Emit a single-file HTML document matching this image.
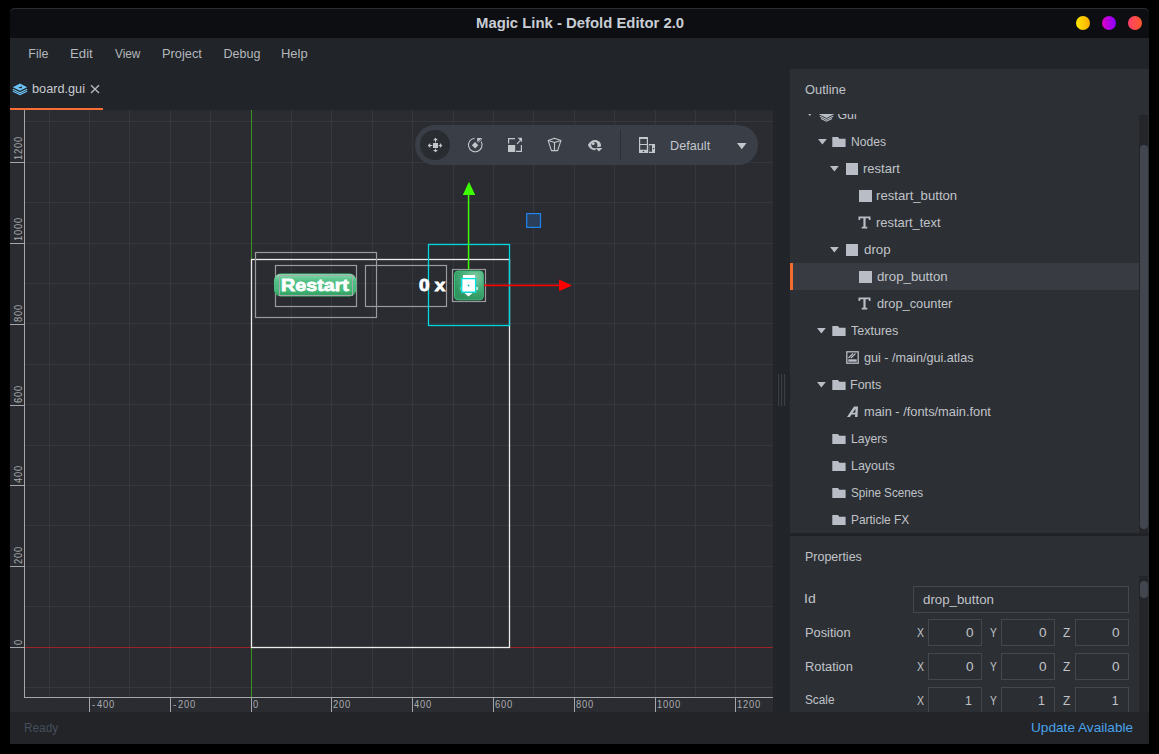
<!DOCTYPE html>
<html><head><meta charset="utf-8">
<style>
*{margin:0;padding:0;box-sizing:border-box}
html,body{width:1159px;height:754px;overflow:hidden;background:#000;font-family:"Liberation Sans",sans-serif;position:relative}
.r{position:absolute}
.t{position:absolute;white-space:nowrap;line-height:1;transform-origin:0 0}
.dot{position:absolute;top:15.7px;width:14px;height:14px;border-radius:50%}
</style></head><body>
<div class="r" style="left:10px;top:8px;width:1139px;height:736px;background:#212428;border-radius:5px 5px 0 0;"></div>
<div class="r" style="left:10px;top:8px;width:1139px;height:30px;background:#0c0e12;border-radius:5px 5px 0 0;box-shadow:inset 0 1px 0 #2a2c31;"></div>
<div class="t" style="left:475.63px;top:15.61px;font-size:14.75px;color:#c9cdd4;font-weight:bold;transform:scaleX(1.0077);">Magic Link - Defold Editor 2.0</div>
<div class="dot" style="left:1076px;background:linear-gradient(90deg,#ffe800,#ffad00)"></div>
<div class="dot" style="left:1102px;background:linear-gradient(90deg,#dc00c4,#8800ff)"></div>
<div class="dot" style="left:1128px;background:linear-gradient(90deg,#ff3f6c,#ff5a28)"></div>
<div class="t" style="left:28.30px;top:47.52px;font-size:12.5px;color:#b4b8bd;font-weight:normal;">File</div>
<div class="t" style="left:70.24px;top:47.52px;font-size:12.5px;color:#b4b8bd;font-weight:normal;transform:scaleX(1.0585);">Edit</div>
<div class="t" style="left:115.00px;top:47.52px;font-size:12.5px;color:#b4b8bd;font-weight:normal;transform:scaleX(0.9451);">View</div>
<div class="t" style="left:162.18px;top:47.52px;font-size:12.5px;color:#b4b8bd;font-weight:normal;transform:scaleX(1.0244);">Project</div>
<div class="t" style="left:223.50px;top:47.52px;font-size:12.5px;color:#b4b8bd;font-weight:normal;">Debug</div>
<div class="t" style="left:281.16px;top:47.52px;font-size:12.5px;color:#b4b8bd;font-weight:normal;transform:scaleX(1.0377);">Help</div>
<svg class="r" style="left:12px;top:83px" width="17" height="13" viewBox="0 0 17 13">
<path d="M0.8 4.2 L8 0.6 L15.2 4.2 L8 7.8 Z" fill="#6cc3f5"/>
<path d="M6.2 4.6 L10.2 3.2 L9.6 5.6 Z" fill="#212428"/>
<g fill="none" stroke="#6cc3f5" stroke-width="1.1" stroke-linejoin="miter">
<path d="M0.8 6.3 L8 9.8 L15.2 6.3"/>
<path d="M0.8 8.3 L8 11.6 L15.2 8.3"/>
</g></svg>
<div class="t" style="left:32.24px;top:82.73px;font-size:12.6px;color:#c7cbd0;font-weight:normal;transform:scaleX(1.0085);">board.gui</div>
<svg class="r" style="left:90px;top:84px" width="10" height="10" viewBox="0 0 10 10"><path d="M1 1.2 L9 9 M9 1.2 L1 9" stroke="#b4b8bc" stroke-width="1.4"/></svg>
<div class="r" style="left:10px;top:108px;width:93px;height:2px;background:#f76d33;"></div>
<div class="r" style="left:10px;top:110px;width:763px;height:602px;background:#2a2c31;"></div>
<svg class="r" style="left:10px;top:110px" width="763" height="602" viewBox="10 110 763 602" shape-rendering="crispEdges"><g fill="#34373c"><rect x="49" y="110" width="1" height="587"/><rect x="89" y="110" width="1" height="587"/><rect x="129" y="110" width="1" height="587"/><rect x="170" y="110" width="1" height="587"/><rect x="210" y="110" width="1" height="587"/><rect x="251" y="110" width="1" height="587"/><rect x="291" y="110" width="1" height="587"/><rect x="331" y="110" width="1" height="587"/><rect x="372" y="110" width="1" height="587"/><rect x="412" y="110" width="1" height="587"/><rect x="453" y="110" width="1" height="587"/><rect x="493" y="110" width="1" height="587"/><rect x="533" y="110" width="1" height="587"/><rect x="574" y="110" width="1" height="587"/><rect x="614" y="110" width="1" height="587"/><rect x="655" y="110" width="1" height="587"/><rect x="695" y="110" width="1" height="587"/><rect x="735" y="110" width="1" height="587"/><rect x="25" y="687" width="748" height="1"/><rect x="25" y="647" width="748" height="1"/><rect x="25" y="606" width="748" height="1"/><rect x="25" y="566" width="748" height="1"/><rect x="25" y="525" width="748" height="1"/><rect x="25" y="485" width="748" height="1"/><rect x="25" y="445" width="748" height="1"/><rect x="25" y="404" width="748" height="1"/><rect x="25" y="364" width="748" height="1"/><rect x="25" y="323" width="748" height="1"/><rect x="25" y="283" width="748" height="1"/><rect x="25" y="243" width="748" height="1"/><rect x="25" y="202" width="748" height="1"/><rect x="25" y="162" width="748" height="1"/><rect x="25" y="121" width="748" height="1"/></g><rect x="24" y="110" width="1" height="588" fill="#a4a6a9"/><rect x="24" y="697" width="749" height="1" fill="#a4a6a9"/><rect x="89" y="697" width="1" height="15" fill="#a4a6a9"/><rect x="170" y="697" width="1" height="15" fill="#a4a6a9"/><rect x="251" y="697" width="1" height="15" fill="#a4a6a9"/><rect x="331" y="697" width="1" height="15" fill="#a4a6a9"/><rect x="412" y="697" width="1" height="15" fill="#a4a6a9"/><rect x="493" y="697" width="1" height="15" fill="#a4a6a9"/><rect x="574" y="697" width="1" height="15" fill="#a4a6a9"/><rect x="655" y="697" width="1" height="15" fill="#a4a6a9"/><rect x="735" y="697" width="1" height="15" fill="#a4a6a9"/><rect x="10" y="647" width="15" height="1" fill="#a4a6a9"/><rect x="10" y="566" width="15" height="1" fill="#a4a6a9"/><rect x="10" y="485" width="15" height="1" fill="#a4a6a9"/><rect x="10" y="405" width="15" height="1" fill="#a4a6a9"/><rect x="10" y="324" width="15" height="1" fill="#a4a6a9"/><rect x="10" y="243" width="15" height="1" fill="#a4a6a9"/><rect x="10" y="162" width="15" height="1" fill="#a4a6a9"/><rect x="25" y="647" width="748" height="1" fill="#9c2427"/><rect x="251" y="110" width="1" height="587" fill="#37921f"/></svg>
<div class="t" style="left:92.44px;top:700.27px;font-size:10.2px;color:#a9abae;transform:scaleX(0.92)">-</div>
<div class="t" style="left:97.39px;top:700.27px;font-size:10.2px;color:#a9abae;transform:scaleX(0.92)">4</div>
<div class="t" style="left:103.39px;top:700.27px;font-size:10.2px;color:#a9abae;transform:scaleX(0.92)">0</div>
<div class="t" style="left:109.39px;top:700.27px;font-size:10.2px;color:#a9abae;transform:scaleX(0.92)">0</div>
<div class="t" style="left:173.44px;top:700.27px;font-size:10.2px;color:#a9abae;transform:scaleX(0.92)">-</div>
<div class="t" style="left:178.39px;top:700.27px;font-size:10.2px;color:#a9abae;transform:scaleX(0.92)">2</div>
<div class="t" style="left:184.39px;top:700.27px;font-size:10.2px;color:#a9abae;transform:scaleX(0.92)">0</div>
<div class="t" style="left:190.39px;top:700.27px;font-size:10.2px;color:#a9abae;transform:scaleX(0.92)">0</div>
<div class="t" style="left:253.39px;top:700.27px;font-size:10.2px;color:#a9abae;transform:scaleX(0.92)">0</div>
<div class="t" style="left:333.39px;top:700.27px;font-size:10.2px;color:#a9abae;transform:scaleX(0.92)">2</div>
<div class="t" style="left:339.39px;top:700.27px;font-size:10.2px;color:#a9abae;transform:scaleX(0.92)">0</div>
<div class="t" style="left:345.39px;top:700.27px;font-size:10.2px;color:#a9abae;transform:scaleX(0.92)">0</div>
<div class="t" style="left:414.39px;top:700.27px;font-size:10.2px;color:#a9abae;transform:scaleX(0.92)">4</div>
<div class="t" style="left:420.39px;top:700.27px;font-size:10.2px;color:#a9abae;transform:scaleX(0.92)">0</div>
<div class="t" style="left:426.39px;top:700.27px;font-size:10.2px;color:#a9abae;transform:scaleX(0.92)">0</div>
<div class="t" style="left:495.39px;top:700.27px;font-size:10.2px;color:#a9abae;transform:scaleX(0.92)">6</div>
<div class="t" style="left:501.39px;top:700.27px;font-size:10.2px;color:#a9abae;transform:scaleX(0.92)">0</div>
<div class="t" style="left:507.39px;top:700.27px;font-size:10.2px;color:#a9abae;transform:scaleX(0.92)">0</div>
<div class="t" style="left:576.39px;top:700.27px;font-size:10.2px;color:#a9abae;transform:scaleX(0.92)">8</div>
<div class="t" style="left:582.39px;top:700.27px;font-size:10.2px;color:#a9abae;transform:scaleX(0.92)">0</div>
<div class="t" style="left:588.39px;top:700.27px;font-size:10.2px;color:#a9abae;transform:scaleX(0.92)">0</div>
<div class="t" style="left:657.39px;top:700.27px;font-size:10.2px;color:#a9abae;transform:scaleX(0.92)">1</div>
<div class="t" style="left:663.39px;top:700.27px;font-size:10.2px;color:#a9abae;transform:scaleX(0.92)">0</div>
<div class="t" style="left:669.39px;top:700.27px;font-size:10.2px;color:#a9abae;transform:scaleX(0.92)">0</div>
<div class="t" style="left:675.39px;top:700.27px;font-size:10.2px;color:#a9abae;transform:scaleX(0.92)">0</div>
<div class="t" style="left:737.39px;top:700.27px;font-size:10.2px;color:#a9abae;transform:scaleX(0.92)">1</div>
<div class="t" style="left:743.39px;top:700.27px;font-size:10.2px;color:#a9abae;transform:scaleX(0.92)">2</div>
<div class="t" style="left:749.39px;top:700.27px;font-size:10.2px;color:#a9abae;transform:scaleX(0.92)">0</div>
<div class="t" style="left:755.39px;top:700.27px;font-size:10.2px;color:#a9abae;transform:scaleX(0.92)">0</div>
<div class="t" style="left:13.77px;top:644.61px;font-size:10.2px;color:#a9abae;transform-origin:0 0;transform:rotate(-90deg) scaleX(0.92);">0</div>
<div class="t" style="left:13.77px;top:563.61px;font-size:10.2px;color:#a9abae;transform-origin:0 0;transform:rotate(-90deg) scaleX(0.92);">2</div>
<div class="t" style="left:13.77px;top:557.61px;font-size:10.2px;color:#a9abae;transform-origin:0 0;transform:rotate(-90deg) scaleX(0.92);">0</div>
<div class="t" style="left:13.77px;top:551.61px;font-size:10.2px;color:#a9abae;transform-origin:0 0;transform:rotate(-90deg) scaleX(0.92);">0</div>
<div class="t" style="left:13.77px;top:482.61px;font-size:10.2px;color:#a9abae;transform-origin:0 0;transform:rotate(-90deg) scaleX(0.92);">4</div>
<div class="t" style="left:13.77px;top:476.61px;font-size:10.2px;color:#a9abae;transform-origin:0 0;transform:rotate(-90deg) scaleX(0.92);">0</div>
<div class="t" style="left:13.77px;top:470.61px;font-size:10.2px;color:#a9abae;transform-origin:0 0;transform:rotate(-90deg) scaleX(0.92);">0</div>
<div class="t" style="left:13.77px;top:402.61px;font-size:10.2px;color:#a9abae;transform-origin:0 0;transform:rotate(-90deg) scaleX(0.92);">6</div>
<div class="t" style="left:13.77px;top:396.61px;font-size:10.2px;color:#a9abae;transform-origin:0 0;transform:rotate(-90deg) scaleX(0.92);">0</div>
<div class="t" style="left:13.77px;top:390.61px;font-size:10.2px;color:#a9abae;transform-origin:0 0;transform:rotate(-90deg) scaleX(0.92);">0</div>
<div class="t" style="left:13.77px;top:321.61px;font-size:10.2px;color:#a9abae;transform-origin:0 0;transform:rotate(-90deg) scaleX(0.92);">8</div>
<div class="t" style="left:13.77px;top:315.61px;font-size:10.2px;color:#a9abae;transform-origin:0 0;transform:rotate(-90deg) scaleX(0.92);">0</div>
<div class="t" style="left:13.77px;top:309.61px;font-size:10.2px;color:#a9abae;transform-origin:0 0;transform:rotate(-90deg) scaleX(0.92);">0</div>
<div class="t" style="left:13.77px;top:240.61px;font-size:10.2px;color:#a9abae;transform-origin:0 0;transform:rotate(-90deg) scaleX(0.92);">1</div>
<div class="t" style="left:13.77px;top:234.61px;font-size:10.2px;color:#a9abae;transform-origin:0 0;transform:rotate(-90deg) scaleX(0.92);">0</div>
<div class="t" style="left:13.77px;top:228.61px;font-size:10.2px;color:#a9abae;transform-origin:0 0;transform:rotate(-90deg) scaleX(0.92);">0</div>
<div class="t" style="left:13.77px;top:222.61px;font-size:10.2px;color:#a9abae;transform-origin:0 0;transform:rotate(-90deg) scaleX(0.92);">0</div>
<div class="t" style="left:13.77px;top:159.61px;font-size:10.2px;color:#a9abae;transform-origin:0 0;transform:rotate(-90deg) scaleX(0.92);">1</div>
<div class="t" style="left:13.77px;top:153.61px;font-size:10.2px;color:#a9abae;transform-origin:0 0;transform:rotate(-90deg) scaleX(0.92);">2</div>
<div class="t" style="left:13.77px;top:147.61px;font-size:10.2px;color:#a9abae;transform-origin:0 0;transform:rotate(-90deg) scaleX(0.92);">0</div>
<div class="t" style="left:13.77px;top:141.61px;font-size:10.2px;color:#a9abae;transform-origin:0 0;transform:rotate(-90deg) scaleX(0.92);">0</div>
<div id="vpc" style="position:absolute;left:25px;top:110px;width:748px;height:587px;overflow:hidden">
<svg class="r" style="left:-25px;top:-110px" width="1159" height="754" viewBox="0 0 1159 754">
<rect x="251.5" y="259.5" width="258" height="388" fill="none" stroke="#ececec" stroke-width="1.3"/>
<rect x="255.5" y="252.5" width="121.0" height="65.0" fill="none" stroke="#9a9b9d" stroke-width="1.2"/>
<rect x="275.5" y="265.5" width="81.0" height="41.0" fill="none" stroke="#9a9b9d" stroke-width="1.2"/>
<rect x="365.5" y="265.5" width="81.0" height="41.0" fill="none" stroke="#9a9b9d" stroke-width="1.2"/>
<defs>
<linearGradient id="gp" x1="0" y1="0" x2="0" y2="1"><stop offset="0" stop-color="#3ec276"/><stop offset="0.06" stop-color="#a0e2bf"/><stop offset="0.14" stop-color="#6ccf9a"/><stop offset="0.35" stop-color="#50bf84"/><stop offset="0.75" stop-color="#46b87a"/><stop offset="0.88" stop-color="#34a465"/><stop offset="1" stop-color="#3cb872"/></linearGradient>
<linearGradient id="gs" x1="0" y1="0" x2="1" y2="1"><stop offset="0" stop-color="#3daa6c"/><stop offset="0.5" stop-color="#5fc08e"/><stop offset="1" stop-color="#2c925c"/></linearGradient>
<radialGradient id="gs2" cx="0.7" cy="0.2" r="0.8"><stop offset="0" stop-color="#7dcaa2"/><stop offset="0.6" stop-color="#45ab75"/><stop offset="1" stop-color="#2f9560"/></radialGradient>
</defs>
<rect x="274" y="273.6" width="82.3" height="23" rx="7" fill="url(#gp)"/>
<rect x="279.5" y="275.5" width="73" height="20" fill="none" stroke="#a6a8aa" stroke-width="1"/>
<rect x="452.5" y="269.5" width="33" height="32" fill="none" stroke="#9a9b9d" stroke-width="1.2"/>
<rect x="454.5" y="271" width="28.8" height="28.8" rx="3.5" fill="url(#gs2)" stroke="#3fbf7a" stroke-width="1"/>
<g fill="#ffffff"><rect x="463" y="275" width="12" height="3"/><rect x="462.2" y="278.2" width="13.7" height="13.7"/><rect x="460.5" y="287" width="2" height="3" opacity="0.7"/><rect x="476" y="287" width="2" height="3" opacity="0.7"/><path d="M464.5 293 L472.5 293 L468.5 296.5Z"/></g>
<rect x="461.6" y="278.6" width="14" height="13.6" fill="none" stroke="#00e1e6" stroke-width="1.3"/>
<circle cx="468.5" cy="285.5" r="0.9" fill="#00c8d0"/>
<rect x="428.5" y="244.5" width="81" height="81" fill="none" stroke="#00d8df" stroke-width="1.3"/>
<rect x="467.8" y="194" width="1.5" height="75.5" fill="#3cff00"/>
<path d="M462.8 195 L475.2 195 L469 181.7Z" fill="#3cff00"/>
<rect x="484" y="284.6" width="76" height="1.6" fill="#ff0000"/>
<path d="M559 279.5 L559 291.2 L572 285.4Z" fill="#ff0000"/>
<rect x="526.7" y="213.6" width="13.8" height="13.8" fill="#2b3f5a" stroke="#1f84f0" stroke-width="1.2"/>
</svg>
</div>
<div class="t" style="left:281.32px;top:276.67px;font-size:17.4px;color:#ffffff;font-weight:bold;transform:scaleX(1.1324);-webkit-text-stroke:0.8px #fff;">Restart</div>
<div class="t" style="left:418.74px;top:277.96px;font-size:16px;color:#ffffff;font-weight:bold;transform:scaleX(1.1852);-webkit-text-stroke:0.8px #fff;">0 x</div>
<div class="r" style="left:415px;top:125px;width:343px;height:40px;background:#3a3e46;border-radius:20px;"></div>
<div class="r" style="left:420.2px;top:130.2px;width:29.6px;height:29.6px;border-radius:50%;background:#292c31"></div>
<div class="r" style="left:620px;top:130px;width:1px;height:30px;background:#2d3035;"></div>
<svg class="r" style="left:424px;top:134px" width="22" height="22" viewBox="424 134 22 22"><g fill="#c3c7cc">
<rect x="433" y="143" width="5" height="5"/>
<rect x="435" y="140" width="1" height="2.4"/><path d="M435.5 137.7 L438 140.3 L433 140.3Z"/>
<rect x="435" y="148.6" width="1" height="1.6"/><path d="M435.5 152.3 L438 149.9 L433 149.9Z"/>
<rect x="430" y="145" width="2.4" height="1"/><path d="M427.7 145.5 L430.3 143 L430.3 148Z"/>
<rect x="438.6" y="145" width="1.6" height="1"/><path d="M442.3 145.5 L439.9 143 L439.9 148Z"/>
</g></svg>
<svg class="r" style="left:464px;top:134px" width="22" height="22" viewBox="464 134 22 22">
<path d="M474.6 138.2 A6.8 6.8 0 1 0 481.2 141.6" fill="none" stroke="#c3c7cc" stroke-width="1.1"/>
<path d="M471.9 145.2 L475.1 142 L478.3 145.2 L475.1 148.4Z" fill="#c3c7cc"/>
<path d="M477.2 137.9 L482.2 137.9 L477.2 142.3Z" fill="#c3c7cc"/>
<path d="M478.3 142.6 L482 139" stroke="#c3c7cc" stroke-width="0.9" opacity="0.7"/>
</svg>
<svg class="r" style="left:504px;top:134px" width="22" height="22" viewBox="504 134 22 22">
<rect x="508" y="145" width="7.2" height="7" fill="#c3c7cc"/>
<path d="M508.6 143.5 L508.6 138.6 L515 138.6" fill="none" stroke="#c3c7cc" stroke-width="1.2"/>
<path d="M516 151.4 L521.4 151.4 L521.4 145" fill="none" stroke="#c3c7cc" stroke-width="1.2"/>
<path d="M517 143.8 L520.5 140.3" stroke="#c3c7cc" stroke-width="1.2"/><path d="M522 137.8 L522 142.2 L517.6 137.8Z" fill="#c3c7cc"/>
</svg>
<svg class="r" style="left:544px;top:134px" width="22" height="22" viewBox="544 134 22 22"><g fill="none" stroke="#c3c7cc" stroke-width="1.1" stroke-linejoin="round">
<path d="M548.2 140.6 L554.5 138.3 L560.9 140.6 L557.6 150.6 L551.4 150.6 Z"/>
<path d="M548.2 140.6 L554.5 142.6 L560.9 140.6 M554.5 142.6 L554.5 150.6"/>
</g></svg>
<svg class="r" style="left:584px;top:134px" width="22" height="22" viewBox="584 134 22 22">
<path d="M587.9 145.1 C589.6 141.5 592.5 139.9 594.8 139.9 C598.3 139.9 601 142.3 601 145.1 C601 148.1 598.2 150.2 594.8 150.2 C591.7 150.2 589.4 148.4 587.9 145.1 Z M591.2 145.1 A3.1 3.1 0 1 0 597.4 145.1 A3.1 3.1 0 1 0 591.2 145.1 Z" fill="#c3c7cc" fill-rule="evenodd"/>
<circle cx="593.1" cy="143.4" r="1.5" fill="#c3c7cc"/>
<rect x="595.6" y="146.9" width="8" height="6" fill="#3a3e46"/>
<path d="M595.6 148.1 L602.4 148.1 L599 151.5Z" fill="#c3c7cc"/>
</svg>
<svg class="r" style="left:634px;top:132px" width="26" height="26" viewBox="634 132 26 26">
<path d="M639 137 L648 137 L648 153 L639 153Z M640.2 139.1 L646.8 139.1 L646.8 143.9 L640.2 143.9Z M640.2 145.1 L646.8 145.1 L646.8 149.8 L640.2 149.8Z" fill="#c3c7cc" fill-rule="evenodd"/>
<circle cx="643.5" cy="151.5" r="0.8" fill="#3a3e46"/>
<path d="M648.8 144 L655 144 L655 153 L648.8 153Z M649.2 145.3 L652 145.3 L652 151.8 L649.2 151.8Z" fill="#c3c7cc" fill-rule="evenodd"/>
<circle cx="653.5" cy="148.5" r="0.7" fill="#3a3e46"/>
</svg>
<div class="t" style="left:670.49px;top:139.62px;font-size:12.5px;color:#c3c7cc;font-weight:normal;transform:scaleX(1.0139);">Default</div>
<svg class="r" style="left:737px;top:143px" width="10" height="7" viewBox="0 0 10 7"><path d="M0 0 L9.5 0 L4.75 6.3Z" fill="#c3c7cc"/></svg>
<svg class="r" style="left:778px;top:374px" width="8" height="32"><g fill="#3b3e43"><rect x="0" y="0" width="1.2" height="32" rx="0.6"/><rect x="3" y="0" width="1.2" height="32" rx="0.6"/><rect x="6" y="0" width="1.2" height="32" rx="0.6"/></g></svg>
<div class="r" style="left:790px;top:69px;width:359px;height:464px;background:#2c2f34;"></div>
<div class="t" style="left:804.62px;top:84.19px;font-size:12.3px;color:#c0c4c9;font-weight:normal;transform:scaleX(1.0479);">Outline</div>
<div id="tree" style="position:absolute;left:790px;top:114px;width:349px;height:419px;overflow:hidden">
<div class="t" style="left:47.38px;top:-5.40px;font-size:12.4px;color:#c0c4c9;">Gui</div><svg class="r" style="left:28.5px;top:-5.4px" width="16" height="13" viewBox="0 0 16 13"><g fill="none" stroke="#b9bec6" stroke-width="1.1"><path d="M0.8 5 L7.5 1.5 L14.2 5 L7.5 8.5Z" fill="#b9bec6"/><path d="M0.8 7.2 L7.5 10.5 L14.2 7.2"/><path d="M2 9.5 L7.5 12.2 L13 9.5"/></g></svg><svg class="r" style="left:16.7px;top:-0.6px" width="6" height="5" viewBox="0 0 6 5"><path d="M0.5 0 L5 0 L2.75 3Z" fill="#b9bec6"/></svg><div class="t" style="left:60.83px;top:21.60px;font-size:12.4px;color:#c0c4c9;transform:scaleX(0.9765);">Nodes</div><svg class="r" style="left:42.3px;top:22.6px" width="14" height="11" viewBox="0 0 14 11"><path d="M0.3 0 L6 0 L7.3 1.8 L13.6 1.8 L13.6 10 L0.3 10Z" fill="#b9bec6"/><rect x="6.3" y="1" width="7.5" height="1" fill="#2c2f34" opacity="0.0"/></svg><svg class="r" style="left:27.7px;top:24.5px" width="10" height="7" viewBox="0 0 10 7"><path d="M0 0 L8.8 0 L4.4 5.5Z" fill="#b9bec6"/></svg><div class="t" style="left:73.25px;top:48.60px;font-size:12.4px;color:#c0c4c9;transform:scaleX(1.0529);">restart</div><div class="r" style="left:55.8px;top:49.1px;width:12.6px;height:12px;background:#b9bec6"></div><svg class="r" style="left:40.0px;top:51.5px" width="10" height="7" viewBox="0 0 10 7"><path d="M0 0 L8.8 0 L4.4 5.5Z" fill="#b9bec6"/></svg><div class="t" style="left:86.44px;top:75.60px;font-size:12.4px;color:#c0c4c9;transform:scaleX(1.0619);">restart_button</div><div class="r" style="left:69.0px;top:76.1px;width:12.6px;height:12px;background:#b9bec6"></div><div class="t" style="left:86.46px;top:102.60px;font-size:12.4px;color:#c0c4c9;transform:scaleX(1.0410);">restart_text</div><svg class="r" style="left:67.8px;top:102.1px" width="13" height="13" viewBox="0 0 13 13"><path d="M0.5 0.5 L12.5 0.5 L12.5 4 L11 4 L10.5 2.3 L7.6 2.3 L7.6 10.8 L9.3 10.8 L9.3 12.4 L3.7 12.4 L3.7 10.8 L5.4 10.8 L5.4 2.3 L2.5 2.3 L2 4 L0.5 4Z" fill="#b9bec6"/></svg><div class="t" style="left:73.57px;top:129.60px;font-size:12.4px;color:#c0c4c9;transform:scaleX(1.0711);">drop</div><div class="r" style="left:55.8px;top:130.1px;width:12.6px;height:12px;background:#b9bec6"></div><svg class="r" style="left:40.0px;top:132.5px" width="10" height="7" viewBox="0 0 10 7"><path d="M0 0 L8.8 0 L4.4 5.5Z" fill="#b9bec6"/></svg><div class="r" style="left:0;top:149.1px;width:349px;height:27px;background:#383b41"></div><div class="r" style="left:0;top:149.1px;width:2.5px;height:27px;background:#f26b30"></div><div class="t" style="left:86.77px;top:156.60px;font-size:12.4px;color:#c0c4c9;transform:scaleX(1.0691);">drop_button</div><div class="r" style="left:69.0px;top:157.1px;width:12.6px;height:12px;background:#b9bec6"></div><div class="t" style="left:86.79px;top:183.60px;font-size:12.4px;color:#c0c4c9;transform:scaleX(1.0315);">drop_counter</div><svg class="r" style="left:67.8px;top:183.1px" width="13" height="13" viewBox="0 0 13 13"><path d="M0.5 0.5 L12.5 0.5 L12.5 4 L11 4 L10.5 2.3 L7.6 2.3 L7.6 10.8 L9.3 10.8 L9.3 12.4 L3.7 12.4 L3.7 10.8 L5.4 10.8 L5.4 2.3 L2.5 2.3 L2 4 L0.5 4Z" fill="#b9bec6"/></svg><div class="t" style="left:61.25px;top:210.60px;font-size:12.4px;color:#c0c4c9;transform:scaleX(1.0110);">Textures</div><svg class="r" style="left:42.0px;top:211.6px" width="14" height="11" viewBox="0 0 14 11"><path d="M0.3 0 L6 0 L7.3 1.8 L13.6 1.8 L13.6 10 L0.3 10Z" fill="#b9bec6"/><rect x="6.3" y="1" width="7.5" height="1" fill="#2c2f34" opacity="0.0"/></svg><svg class="r" style="left:27.4px;top:213.5px" width="10" height="7" viewBox="0 0 10 7"><path d="M0 0 L8.8 0 L4.4 5.5Z" fill="#b9bec6"/></svg><div class="t" style="left:74.09px;top:237.60px;font-size:12.4px;color:#c0c4c9;transform:scaleX(1.0190);">gui - /main/gui.atlas</div><svg class="r" style="left:56.1px;top:237.4px" width="13" height="13" viewBox="0 0 13 13"><rect x="0.8" y="0.8" width="11.4" height="11.4" fill="none" stroke="#b9bec6" stroke-width="1.3"/><path d="M2.5 7 L7 2.5 M5 7 L9.5 2.5" stroke="#b9bec6" stroke-width="1.1"/><rect x="2.3" y="8.3" width="8.4" height="2.4" fill="#b9bec6"/></svg><div class="t" style="left:60.30px;top:264.60px;font-size:12.4px;color:#c0c4c9;transform:scaleX(1.0076);">Fonts</div><svg class="r" style="left:41.8px;top:265.6px" width="14" height="11" viewBox="0 0 14 11"><path d="M0.3 0 L6 0 L7.3 1.8 L13.6 1.8 L13.6 10 L0.3 10Z" fill="#b9bec6"/><rect x="6.3" y="1" width="7.5" height="1" fill="#2c2f34" opacity="0.0"/></svg><svg class="r" style="left:27.2px;top:267.5px" width="10" height="7" viewBox="0 0 10 7"><path d="M0 0 L8.8 0 L4.4 5.5Z" fill="#b9bec6"/></svg><div class="t" style="left:73.77px;top:291.60px;font-size:12.4px;color:#c0c4c9;transform:scaleX(1.0350);">main - /fonts/main.font</div><svg class="r" style="left:56.8px;top:291.6px" width="12" height="12" viewBox="0 0 12 12"><path d="M0 11 L7 0.5 L11 0.5 L10.5 11 L8 11 L8.2 8.5 L4.5 8.5 L3 11Z M5.6 6.7 L8.3 6.7 L8.6 2.8Z" fill="#b9bec6" fill-rule="evenodd"/></svg><div class="t" style="left:60.53px;top:318.60px;font-size:12.4px;color:#c0c4c9;transform:scaleX(0.9784);">Layers</div><svg class="r" style="left:42.0px;top:319.6px" width="14" height="11" viewBox="0 0 14 11"><path d="M0.3 0 L6 0 L7.3 1.8 L13.6 1.8 L13.6 10 L0.3 10Z" fill="#b9bec6"/><rect x="6.3" y="1" width="7.5" height="1" fill="#2c2f34" opacity="0.0"/></svg><div class="t" style="left:60.50px;top:345.60px;font-size:12.4px;color:#c0c4c9;transform:scaleX(1.0063);">Layouts</div><svg class="r" style="left:42.0px;top:346.6px" width="14" height="11" viewBox="0 0 14 11"><path d="M0.3 0 L6 0 L7.3 1.8 L13.6 1.8 L13.6 10 L0.3 10Z" fill="#b9bec6"/><rect x="6.3" y="1" width="7.5" height="1" fill="#2c2f34" opacity="0.0"/></svg><div class="t" style="left:60.97px;top:372.60px;font-size:12.4px;color:#c0c4c9;transform:scaleX(0.9428);">Spine Scenes</div><svg class="r" style="left:42.0px;top:373.6px" width="14" height="11" viewBox="0 0 14 11"><path d="M0.3 0 L6 0 L7.3 1.8 L13.6 1.8 L13.6 10 L0.3 10Z" fill="#b9bec6"/><rect x="6.3" y="1" width="7.5" height="1" fill="#2c2f34" opacity="0.0"/></svg><div class="t" style="left:60.55px;top:399.60px;font-size:12.4px;color:#c0c4c9;transform:scaleX(0.9620);">Particle FX</div><svg class="r" style="left:42.0px;top:400.6px" width="14" height="11" viewBox="0 0 14 11"><path d="M0.3 0 L6 0 L7.3 1.8 L13.6 1.8 L13.6 10 L0.3 10Z" fill="#b9bec6"/><rect x="6.3" y="1" width="7.5" height="1" fill="#2c2f34" opacity="0.0"/></svg>
</div>
<div class="r" style="left:1139px;top:115px;width:9px;height:418px;background:#24262a;"></div>
<div class="r" style="left:1140px;top:145px;width:8px;height:383.5px;background:#42464e;border-radius:4px;"></div>
<div class="r" style="left:790px;top:534px;width:359px;height:2px;background:#202226;"></div>
<div class="r" style="left:790px;top:536px;width:359px;height:176px;background:#2c2f34;"></div>
<div class="t" style="left:804.70px;top:550.79px;font-size:12.3px;color:#c0c4c9;font-weight:normal;transform:scaleX(1.0133);">Properties</div>
<div class="t" style="left:804.44px;top:592.99px;font-size:12.3px;color:#c0c4c9;font-weight:normal;transform:scaleX(1.1394);">Id</div>
<div class="t" style="left:804.67px;top:627.19px;font-size:12.3px;color:#c0c4c9;font-weight:normal;transform:scaleX(1.0427);">Position</div>
<div class="t" style="left:804.67px;top:660.69px;font-size:12.3px;color:#c0c4c9;font-weight:normal;transform:scaleX(1.0455);">Rotation</div>
<div class="t" style="left:805.17px;top:694.29px;font-size:12.3px;color:#c0c4c9;font-weight:normal;transform:scaleX(0.9595);">Scale</div>
<div style="position:absolute;left:790px;top:575px;width:349px;height:137px;overflow:hidden">
<div class="r" style="left:123px;top:11px;width:216px;height:27px;border:1px solid #44474d;background:#2b2e33;box-sizing:border-box"></div>
<div class="r" style="left:138px;top:44px;width:54px;height:27px;border:1px solid #44474d;background:#2b2e33;box-sizing:border-box"></div>
<div class="r" style="left:211px;top:44px;width:54px;height:27px;border:1px solid #44474d;background:#2b2e33;box-sizing:border-box"></div>
<div class="r" style="left:285px;top:44px;width:54px;height:27px;border:1px solid #44474d;background:#2b2e33;box-sizing:border-box"></div>
<div class="r" style="left:138px;top:78px;width:54px;height:27px;border:1px solid #44474d;background:#2b2e33;box-sizing:border-box"></div>
<div class="r" style="left:211px;top:78px;width:54px;height:27px;border:1px solid #44474d;background:#2b2e33;box-sizing:border-box"></div>
<div class="r" style="left:285px;top:78px;width:54px;height:27px;border:1px solid #44474d;background:#2b2e33;box-sizing:border-box"></div>
<div class="r" style="left:138px;top:112px;width:54px;height:27px;border:1px solid #44474d;background:#2b2e33;box-sizing:border-box"></div>
<div class="r" style="left:211px;top:112px;width:54px;height:27px;border:1px solid #44474d;background:#2b2e33;box-sizing:border-box"></div>
<div class="r" style="left:285px;top:112px;width:54px;height:27px;border:1px solid #44474d;background:#2b2e33;box-sizing:border-box"></div>
</div>
<div class="t" style="left:922.57px;top:593.90px;font-size:12.4px;color:#c0c4c9;font-weight:normal;transform:scaleX(1.0722);">drop_button</div>
<div class="t" style="left:916.79px;top:627.09px;font-size:12.3px;color:#c0c4c9;font-weight:normal;transform:scaleX(0.8517);">X</div>
<div class="t" style="left:989.80px;top:627.09px;font-size:12.3px;color:#c0c4c9;font-weight:normal;transform:scaleX(0.8325);">Y</div>
<div class="t" style="left:1062.95px;top:627.09px;font-size:12.3px;color:#c0c4c9;font-weight:normal;transform:scaleX(0.9608);">Z</div>
<div class="t" style="left:965.52px;top:627.09px;font-size:12.3px;color:#c0c4c9;font-weight:normal;transform:scaleX(1.1064);">0</div>
<div class="t" style="left:1038.52px;top:627.09px;font-size:12.3px;color:#c0c4c9;font-weight:normal;transform:scaleX(1.1064);">0</div>
<div class="t" style="left:1112.22px;top:627.09px;font-size:12.3px;color:#c0c4c9;font-weight:normal;transform:scaleX(1.1064);">0</div>
<div class="t" style="left:916.79px;top:660.79px;font-size:12.3px;color:#c0c4c9;font-weight:normal;transform:scaleX(0.8517);">X</div>
<div class="t" style="left:989.80px;top:660.79px;font-size:12.3px;color:#c0c4c9;font-weight:normal;transform:scaleX(0.8325);">Y</div>
<div class="t" style="left:1062.95px;top:660.79px;font-size:12.3px;color:#c0c4c9;font-weight:normal;transform:scaleX(0.9608);">Z</div>
<div class="t" style="left:965.52px;top:660.79px;font-size:12.3px;color:#c0c4c9;font-weight:normal;transform:scaleX(1.1064);">0</div>
<div class="t" style="left:1038.52px;top:660.79px;font-size:12.3px;color:#c0c4c9;font-weight:normal;transform:scaleX(1.1064);">0</div>
<div class="t" style="left:1112.22px;top:660.79px;font-size:12.3px;color:#c0c4c9;font-weight:normal;transform:scaleX(1.1064);">0</div>
<div class="t" style="left:916.79px;top:694.59px;font-size:12.3px;color:#c0c4c9;font-weight:normal;transform:scaleX(0.8517);">X</div>
<div class="t" style="left:989.80px;top:694.59px;font-size:12.3px;color:#c0c4c9;font-weight:normal;transform:scaleX(0.8325);">Y</div>
<div class="t" style="left:1062.95px;top:694.59px;font-size:12.3px;color:#c0c4c9;font-weight:normal;transform:scaleX(0.9608);">Z</div>
<div class="t" style="left:965.03px;top:694.59px;font-size:12.3px;color:#c0c4c9;font-weight:normal;">1</div>
<div class="t" style="left:1038.03px;top:694.59px;font-size:12.3px;color:#c0c4c9;font-weight:normal;">1</div>
<div class="t" style="left:1111.73px;top:694.59px;font-size:12.3px;color:#c0c4c9;font-weight:normal;">1</div>
<div class="r" style="left:790px;top:711.5px;width:359px;height:1px;background:#2c2f34;"></div>
<div class="r" style="left:1139px;top:576px;width:9px;height:136px;background:#24262a;"></div>
<div class="r" style="left:1140px;top:581px;width:8px;height:17px;background:#42464e;border-radius:4px;"></div>
<div class="r" style="left:10px;top:712px;width:1139px;height:32px;background:#222428;"></div>
<div class="t" style="left:23.85px;top:721.82px;font-size:12.5px;color:#464e5a;font-weight:normal;transform:scaleX(0.9452);">Ready</div>
<div class="t" style="left:1031.48px;top:722.08px;font-size:12.9px;color:#4aa2ea;font-weight:normal;transform:scaleX(1.0581);">Update Available</div>
</body></html>
